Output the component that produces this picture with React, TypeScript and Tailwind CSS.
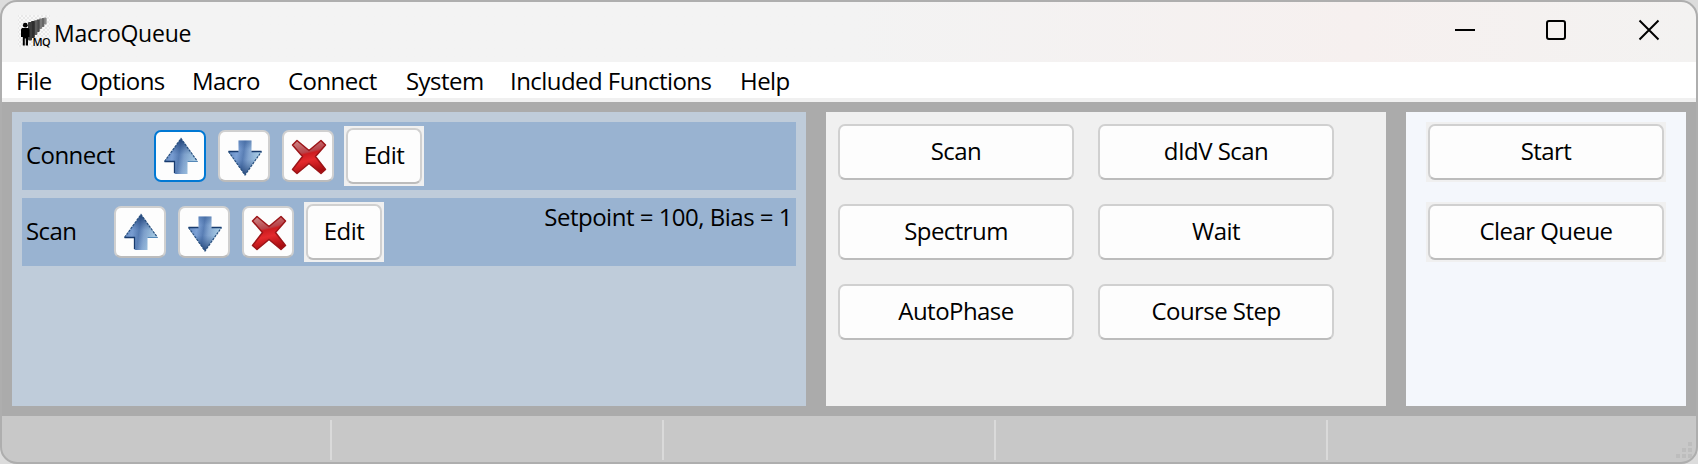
import React from "react";

const face = "font-['Open_Sans','Noto_Sans',sans-serif] text-black whitespace-nowrap";

function QueueLogo() {
  const people = [
    { x: 27, top: 2.5, bottom: 9.5, w: 2.6, c: "#8c8c8c" },
    { x: 24.5, top: 3, bottom: 12, w: 2.8, c: "#666666" },
    { x: 22, top: 3.6, bottom: 14, w: 3, c: "#7a7a7a" },
    { x: 19.5, top: 4.4, bottom: 17, w: 3.2, c: "#484848" },
    { x: 17, top: 5.2, bottom: 20, w: 3.4, c: "#5c5c5c" },
    { x: 14, top: 6, bottom: 23, w: 3.8, c: "#2e2e2e" },
    { x: 11, top: 7, bottom: 25.5, w: 4, c: "#3c3c3c" },
  ];
  return (
    <svg width="34" height="34" viewBox="0 0 34 34" className="shrink-0">
      <defs>
        <pattern id="checker" width="4" height="4" patternUnits="userSpaceOnUse">
          <rect width="4" height="4" fill="#f8f8f8" />
          <path d="M0 0h2v2H0zM2 2h2v2H2z" fill="#e9e9e9" />
        </pattern>
      </defs>
      <rect x="1" y="0" width="32" height="32" fill="url(#checker)" />
      {people.map((p) => (
        <rect key={p.x} x={p.x} y={p.top} width={p.w} height={p.bottom - p.top} rx="1" fill={p.c} />
      ))}
      <g fill="#000">
        <circle cx="8.300" cy="10.200" r="2.400" />
        <path d="M5 13h6.500l1 1.500v7.500h-1.500v8.500H8.800v-7h-1v7H5.800V22H4v-7.500z" />
      </g>
      <text x="15.500" y="31" fontSize="10" textLength="17.500" lengthAdjust="spacingAndGlyphs" fontFamily="Open Sans, sans-serif" fontWeight="600">MQ</text>
    </svg>
  );
}

function Gradients() {
  return (
    <svg width="0" height="0" className="absolute">
      <defs>
        <linearGradient id="steel" x1="0" x2="1" y1="0" y2="0.15">
          <stop offset="0" stopColor="#6085bb" />
          <stop offset="0.3" stopColor="#80a4d8" />
          <stop offset="0.5" stopColor="#5b80b6" />
          <stop offset="0.66" stopColor="#86a8d2" />
          <stop offset="1" stopColor="#b0d4ea" />
        </linearGradient>
        <linearGradient id="shadeTop" x1="0" x2="0" y1="0" y2="1">
          <stop offset="0" stopColor="#123266" stopOpacity="0.8" />
          <stop offset="0.45" stopColor="#234b86" stopOpacity="0.1" />
          <stop offset="1" stopColor="#234b86" stopOpacity="0" />
        </linearGradient>
        <linearGradient id="shadeBottom" x1="0" x2="0" y1="1" y2="0">
          <stop offset="0" stopColor="#123266" stopOpacity="0.8" />
          <stop offset="0.45" stopColor="#234b86" stopOpacity="0.05" />
          <stop offset="0.75" stopColor="#234b86" stopOpacity="0" />
          <stop offset="1" stopColor="#234b86" stopOpacity="0.35" />
        </linearGradient>
        <linearGradient id="red" gradientUnits="userSpaceOnUse" x1="14" y1="10" x2="22" y2="44">
          <stop offset="0" stopColor="#cf8c8c" />
          <stop offset="0.4" stopColor="#b8444a" />
          <stop offset="0.46" stopColor="#cc1c20" />
          <stop offset="0.65" stopColor="#e42a2d" />
          <stop offset="1" stopColor="#a80c10" />
        </linearGradient>
      </defs>
    </svg>
  );
}

const UP = "M27 8.500 43.500 31.500H33.500V44H20.500V31.500H10.500Z";
const DOWN = "M20.500 10.500H33.500V21.500H43.500L27 45 10.500 21.500H20.500Z";
const CROSS =
  "M15 10.500 27 20.500 39 10.500 43.500 15 33.500 26.500 43.500 39.500 39 43.500 27 33.500 15 43.500 10.500 39.500 20.500 26.500 10.500 15Z";

function IconButton({ kind, active = false }: { kind: "up" | "down" | "remove"; active?: boolean }) {
  return (
    <button
      className={
        active
          ? "size-[52px] rounded-[7px] border-2 border-[#0078d4] bg-[#fdfdfd]"
          : "size-[52px] rounded-[7px] border-2 border-[#d0d0d0] border-b-[#bcbcbc] bg-[#fdfdfd]"
      }
    >
      <svg width="48" height="48" viewBox="2 2 48 48">
        {kind === "up" && (
          <>
            <path d={UP} fill="url(#steel)" />
            <path d={UP} fill="url(#shadeTop)" />
            <path d="M10.500 31.500H20.500V43" fill="none" stroke="#173a6d" strokeWidth="1.300" />
            <path d="M10.500 31.500 27 8.500 43.500 31.500" fill="none" stroke="#28507f" strokeWidth="1.200" strokeDasharray="2.500 1" />
            <path d="M33.500 31.500H43.500" stroke="#5488b8" strokeWidth="1.200" />
          </>
        )}
        {kind === "down" && (
          <>
            <path d={DOWN} fill="url(#steel)" />
            <path d={DOWN} fill="url(#shadeBottom)" />
            <path d="M20.500 21.500H10.500M33.500 21.500H43.500" fill="none" stroke="#173a6d" strokeWidth="1.300" />
            <path d="M10.500 21.500 27 45 43.500 21.500" fill="none" stroke="#28507f" strokeWidth="1.200" strokeDasharray="2.500 1" />
          </>
        )}
        {kind === "remove" && (
          <path d={CROSS} fill="url(#red)" stroke="#9c1518" strokeWidth="1.500" strokeLinejoin="round" />
        )}
      </svg>
    </button>
  );
}

function TextButton({ label, wide = true }: { label: string; wide?: boolean }) {
  return (
    <div className={wide ? "h-[60px] w-60 bg-[#f0f0f0] p-0.5" : "h-[60px] w-20 bg-[#f0f0f0] p-0.5"}>
      <button className="flex h-14 w-full items-center justify-center rounded-[7px] border-2 border-[#d0d0d0] border-b-[#bcbcbc] bg-[#fdfdfd] pb-0.5">
        <span>{label}</span>
      </button>
    </div>
  );
}

function QueueRow({ name, width, detail, active }: { name: string; width: string; detail?: string; active?: boolean }) {
  return (
    <div className="flex h-[68px] items-center bg-[#99b3d1] pl-1">
      <div className={width}>{name}</div>
      <div className="flex items-center gap-3">
        <IconButton kind="up" active={active} />
        <IconButton kind="down" />
        <IconButton kind="remove" />
      </div>
      <div className="ml-2.5">
        <TextButton label="Edit" wide={false} />
      </div>
      {detail && <div className="mr-1 ml-auto self-start pt-[3px] tracking-[-0.5px]">{detail}</div>}
    </div>
  );
}

const menu = [
  ["File", "w-16"],
  ["Options", "w-28"],
  ["Macro", "w-24"],
  ["Connect", "w-[118px]"],
  ["System", "w-[104px]"],
  ["Included Functions", "w-[230px]"],
  ["Help", "w-16"],
];

export default function App() {
  return (
    <div className="h-[464px] w-[1698px] bg-[#dcdcdc]">
      <Gradients />
      <div className={`${face} flex h-full flex-col overflow-hidden rounded-[17px] border-2 border-[#aeaeae] bg-[#ababab] text-[24px] leading-8 tracking-[-0.55px]`}>
        <header className="flex h-[60px] shrink-0 bg-linear-to-r from-[#f3f3f3] from-50% via-[#f6f0ef] via-80% to-[#f3f2f1]">
          <div className="flex pt-[13px] pl-[15px]">
            <QueueLogo />
            <h1 className="pt-0.5 pl-[3px] text-[23px] tracking-[-0.25px]">MacroQueue</h1>
          </div>
          <svg className="mt-[17px] mr-9 ml-auto" width="206" height="22" viewBox="0 0 206 22" fill="none" stroke="#000" strokeWidth="2">
            <path d="M1 11H21" />
            <rect x="93" y="2" width="18" height="18" rx="2" />
            <path d="M185.500 1.500 204.500 20.500M204.500 1.500 185.500 20.500" />
          </svg>
        </header>
        <nav className="flex h-10 shrink-0 border-b-4 border-[#f0f0f0] bg-white pt-[3px] pl-[14px]">
          {menu.map(([label, width]) => (
            <span key={label} className={width}>{label}</span>
          ))}
        </nav>
        <main className="flex h-[314px] shrink-0 gap-5 p-2.5">
          <section className="flex w-[794px] flex-col gap-2 bg-[#bfccda] p-2.5">
            <QueueRow name="Connect" width="w-32 pb-0.5" active />
            <QueueRow name="Scan" width="w-[88px] pb-0.5" detail="Setpoint = 100, Bias = 1" />
          </section>
          <section className="w-[560px] bg-[#f0f0f0] p-2.5">
            <div className="grid w-[500px] grid-cols-2 gap-5">
              {["Scan", "dIdV Scan", "Spectrum", "Wait", "AutoPhase", "Course Step"].map((label) => (
                <TextButton key={label} label={label} />
              ))}
            </div>
          </section>
          <section className="flex w-[280px] flex-col gap-5 bg-[#f4f7fc] px-5 py-2.5">
            <TextButton label="Start" />
            <TextButton label="Clear Queue" />
          </section>
        </main>
        <footer className="flex h-[46px] shrink-0 bg-[#c8c8c8] py-1">
          <div className="h-10 w-[330px] border-r-2 border-[#dadada]" />
          <div className="h-10 w-[332px] border-r-2 border-[#dadada]" />
          <div className="h-10 w-[332px] border-r-2 border-[#dadada]" />
          <div className="h-10 w-[332px] border-r-2 border-[#dadada]" />
          <svg className="mt-[22px] mr-1 ml-auto" width="16" height="16" fill="#bdbdbd">
            <path d="M12 0h4v4h-4zM6 6h4v4H6zM12 6h4v4h-4zM0 12h4v4H0zM6 12h4v4H6zM12 12h4v4h-4z" />
          </svg>
        </footer>
      </div>
    </div>
  );
}
